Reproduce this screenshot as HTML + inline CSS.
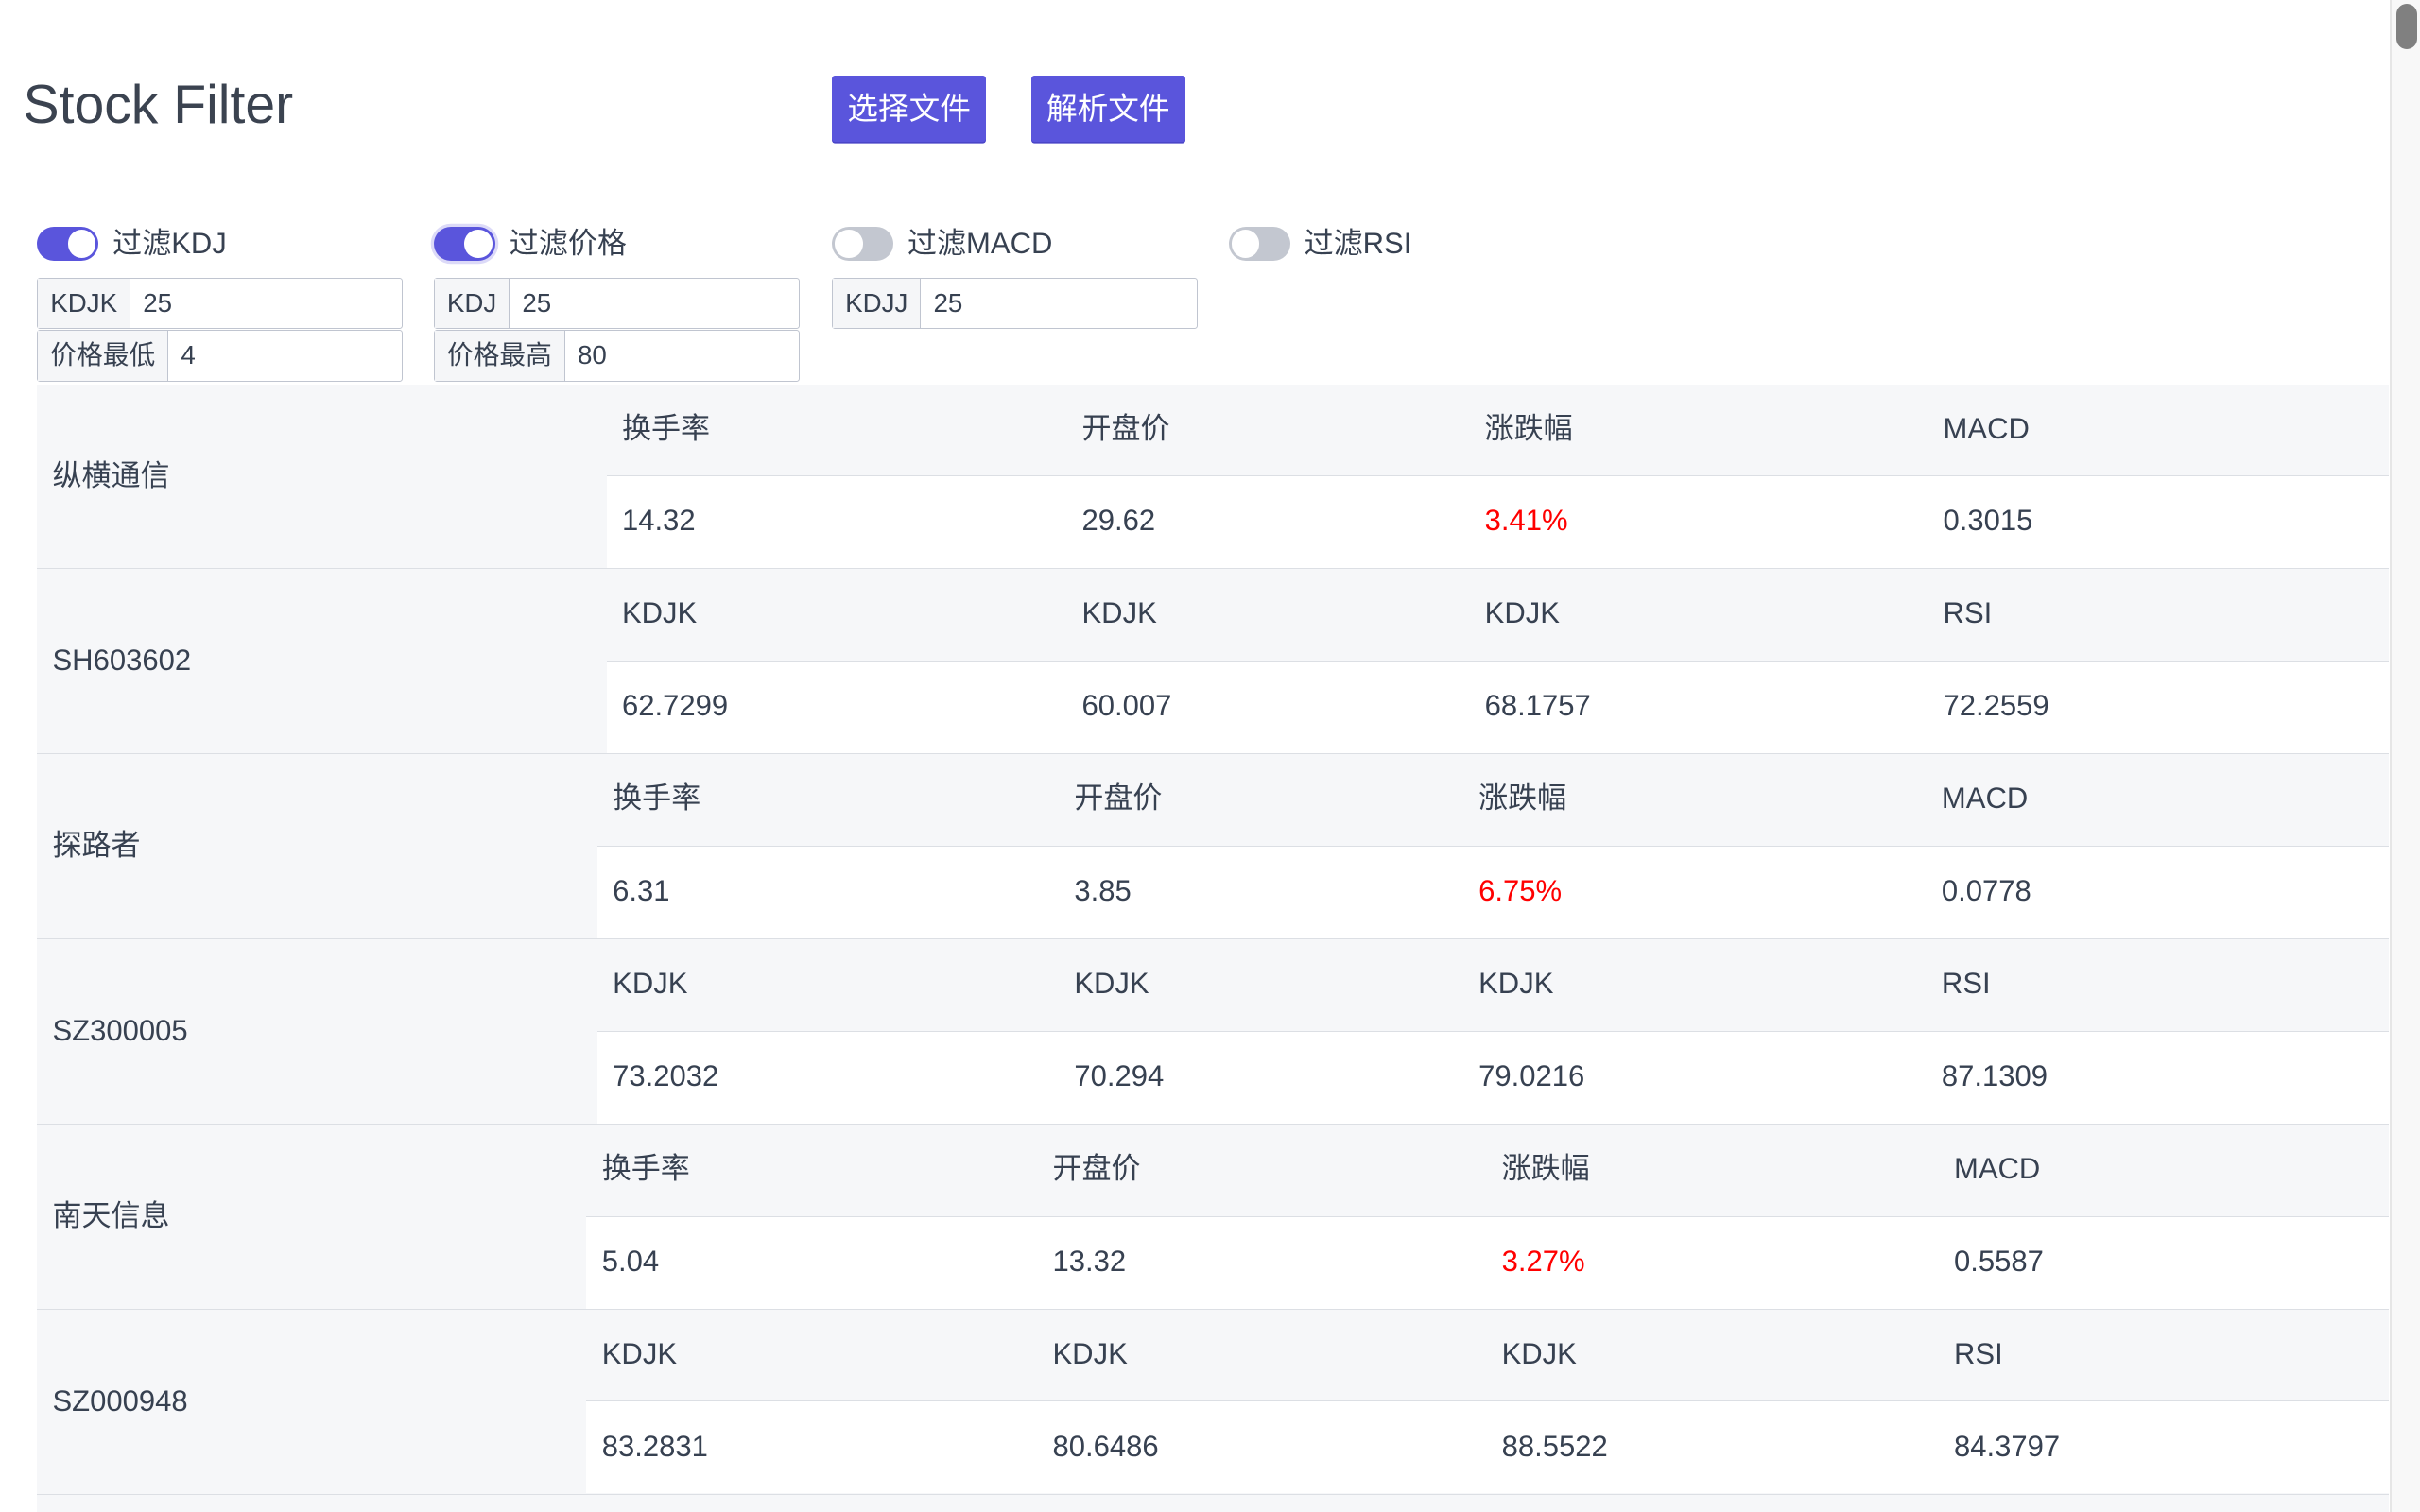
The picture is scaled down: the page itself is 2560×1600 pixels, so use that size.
<!DOCTYPE html>
<html><head><meta charset="utf-8"><style>
html,body{margin:0;padding:0;width:2560px;height:1600px;overflow:hidden;background:#fff;}
body{font-family:"Liberation Sans","Noto Sans CJK SC",sans-serif;color:#374151;}
.w{zoom:1.6327;position:relative;width:1568px;height:980px;overflow:hidden;}
.title{position:absolute;left:15px;top:48px;font-size:35px;color:#3b4350;}
.btn{position:absolute;top:49px;height:43px;width:100px;background:#5a55dc;color:#fff;font-size:20px;line-height:43px;text-align:center;border-radius:2px;box-shadow:0 1px 0 #4a45c8;}
.tg{position:absolute;top:146px;height:24px;font-size:19px;line-height:24px;}
.sw{position:absolute;left:0;top:1px;width:40px;height:22px;border-radius:11px;background:#5a55dc;}
.sw i{position:absolute;right:2px;top:2px;width:18px;height:18px;border-radius:50%;background:#fff;}
.sw.off{background:#c3c7d0}.sw.off i{left:2px;right:auto}
.tg span{position:absolute;left:49px;white-space:nowrap;color:#374151}
.ig{position:absolute;height:32px;width:236px;border:1px solid #c0c5d0;border-radius:2px;display:flex;font-size:17px;line-height:32px;background:#fff}
.ig b{font-weight:normal;background:#f5f6f8;border-right:1px solid #c0c5d0;padding:0 8px}
.ig span{padding-left:8px}
.blk{position:absolute;left:24px;width:1524px;height:120px;background:#f6f7f9;border-bottom:1px solid #dcdfe4;box-sizing:border-box;font-size:19px}
.nm{position:absolute;left:10px;top:0;line-height:119px}
.dr{position:absolute;right:0;top:59px;height:60px;background:#fff;border-top:1px solid #dcdfe4;box-sizing:border-box}
.c{position:absolute;line-height:58px;white-space:nowrap}
.h{top:0}.d{top:60px}
.r{color:#f00}
.sb{position:absolute;left:2528px;top:0;width:32px;height:1600px;background:#f8f8f8;border-left:2px solid #e6e6e6;box-sizing:border-box}
.sb i{position:absolute;left:5px;top:4px;width:22px;height:48px;border-radius:11px;background:#808080}
</style></head><body>
<div class="w">
<div class="title">Stock Filter</div>
<div class="btn" style="left:539px">选择文件</div>
<div class="btn" style="left:668px">解析文件</div>

<div class="tg" style="left:24px"><div class="sw"><i></i></div><span>过滤KDJ</span></div>
<div class="tg" style="left:281px"><div class="sw" style="box-shadow:0 0 0 2px #dcdaf8"><i></i></div><span>过滤价格</span></div>
<div class="tg" style="left:539px"><div class="sw off"><i></i></div><span>过滤MACD</span></div>
<div class="tg" style="left:796px"><div class="sw off"><i></i></div><span>过滤RSI</span></div>

<div class="ig" style="left:24px;top:180px"><b>KDJK</b><span>25</span></div>
<div class="ig" style="left:24px;top:214px"><b>价格最低</b><span>4</span></div>
<div class="ig" style="left:281px;top:180px"><b>KDJ</b><span>25</span></div>
<div class="ig" style="left:281px;top:214px"><b>价格最高</b><span>80</span></div>
<div class="ig" style="left:539px;top:180px"><b>KDJJ</b><span>25</span></div>

<div class="blk" style="top:249px"><div class="nm">纵横通信</div><div class="dr" style="left:369px"></div>
<div class="c h" style="left:379px">换手率</div><div class="c h" style="left:677px">开盘价</div><div class="c h" style="left:938px">涨跌幅</div><div class="c h" style="left:1235px">MACD</div>
<div class="c d" style="left:379px">14.32</div><div class="c d" style="left:677px">29.62</div><div class="c d r" style="left:938px">3.41%</div><div class="c d" style="left:1235px">0.3015</div></div>

<div class="blk" style="top:369px"><div class="nm">SH603602</div><div class="dr" style="left:369px"></div>
<div class="c h" style="left:379px">KDJK</div><div class="c h" style="left:677px">KDJK</div><div class="c h" style="left:938px">KDJK</div><div class="c h" style="left:1235px">RSI</div>
<div class="c d" style="left:379px">62.7299</div><div class="c d" style="left:677px">60.007</div><div class="c d" style="left:938px">68.1757</div><div class="c d" style="left:1235px">72.2559</div></div>

<div class="blk" style="top:489px"><div class="nm">探路者</div><div class="dr" style="left:363px"></div>
<div class="c h" style="left:373px">换手率</div><div class="c h" style="left:672px">开盘价</div><div class="c h" style="left:934px">涨跌幅</div><div class="c h" style="left:1234px">MACD</div>
<div class="c d" style="left:373px">6.31</div><div class="c d" style="left:672px">3.85</div><div class="c d r" style="left:934px">6.75%</div><div class="c d" style="left:1234px">0.0778</div></div>

<div class="blk" style="top:609px"><div class="nm">SZ300005</div><div class="dr" style="left:363px"></div>
<div class="c h" style="left:373px">KDJK</div><div class="c h" style="left:672px">KDJK</div><div class="c h" style="left:934px">KDJK</div><div class="c h" style="left:1234px">RSI</div>
<div class="c d" style="left:373px">73.2032</div><div class="c d" style="left:672px">70.294</div><div class="c d" style="left:934px">79.0216</div><div class="c d" style="left:1234px">87.1309</div></div>

<div class="blk" style="top:729px"><div class="nm">南天信息</div><div class="dr" style="left:356px"></div>
<div class="c h" style="left:366px">换手率</div><div class="c h" style="left:658px">开盘价</div><div class="c h" style="left:949px">涨跌幅</div><div class="c h" style="left:1242px">MACD</div>
<div class="c d" style="left:366px">5.04</div><div class="c d" style="left:658px">13.32</div><div class="c d r" style="left:949px">3.27%</div><div class="c d" style="left:1242px">0.5587</div></div>

<div class="blk" style="top:849px"><div class="nm">SZ000948</div><div class="dr" style="left:356px"></div>
<div class="c h" style="left:366px">KDJK</div><div class="c h" style="left:658px">KDJK</div><div class="c h" style="left:949px">KDJK</div><div class="c h" style="left:1242px">RSI</div>
<div class="c d" style="left:366px">83.2831</div><div class="c d" style="left:658px">80.6486</div><div class="c d" style="left:949px">88.5522</div><div class="c d" style="left:1242px">84.3797</div></div>

<div class="blk" style="top:969px;height:11px;border:none"></div>
</div>
<div class="sb"><i></i></div>
</body></html>
